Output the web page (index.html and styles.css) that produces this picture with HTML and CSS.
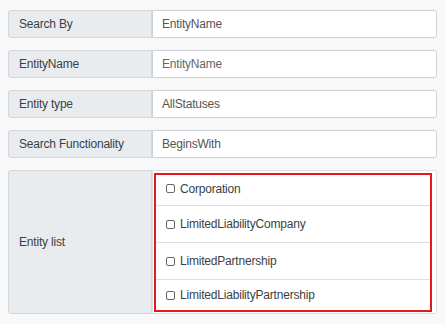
FILE: index.html
```html
<!DOCTYPE html>
<html lang="en">
<head>
  <meta charset="UTF-8" />
  <title>Entity Search</title>
  <meta name="viewport" content="width=device-width, initial-scale=1.0" />
  <link rel="stylesheet" href="styles.css">
</head>
<body>
  <form class="search-form" onsubmit="return false;">
    <div class="row">
      <label class="lbl" for="searchBy">Search By</label>
      <div class="val" id="searchBy">EntityName</div>
    </div>
    <div class="row">
      <label class="lbl" for="entityName">EntityName</label>
      <input class="val" id="entityName" type="text" placeholder="EntityName">
    </div>
    <div class="row">
      <label class="lbl" for="entityType">Entity type</label>
      <div class="val" id="entityType">AllStatuses</div>
    </div>
    <div class="row">
      <label class="lbl" for="searchFn">Search Functionality</label>
      <div class="val" id="searchFn">BeginsWith</div>
    </div>
    <div class="row tall">
      <label class="lbl">Entity list</label>
      <div class="val list-wrap">
        <div class="list">
          <label class="item"><input type="checkbox" value="Corporation"> Corporation</label>
          <label class="item"><input type="checkbox" value="LimitedLiabilityCompany"> LimitedLiabilityCompany</label>
          <label class="item"><input type="checkbox" value="LimitedPartnership"> LimitedPartnership</label>
          <label class="item"><input type="checkbox" value="LimitedLiabilityPartnership"> LimitedLiabilityPartnership</label>
        </div>
      </div>
    </div>
  </form>
</body>
</html>
```

FILE: styles.css
```css
body { margin: 0; padding: 10px 8px; background: #f8f8f8; font-family: 'Liberation Sans', Arial, sans-serif; font-size: 12px; letter-spacing: -0.2px; color: #3a3a3a; }
.search-form { display: flex; flex-direction: column; gap: 12px; }
.row { display: flex; height: 28px; }
.row.tall { height: 144px; }
.lbl { box-sizing: border-box; width: 144px; display: flex; align-items: center; padding-left: 10px; background: #e9ecef; border: 1px solid #d3d7dc; border-radius: 3px 0 0 3px; color: #3a3f47; }
.val { box-sizing: border-box; flex: 1; display: flex; align-items: center; padding: 0 0 0 9px; background: #fff; border: 1px solid #ccd1d8; border-radius: 0 3px 3px 0; color: #555; font: inherit; letter-spacing: inherit; }
input.val::placeholder { color: #666; }
input.val { outline: none; }
.list-wrap { padding: 2px 4px 1px 1px; align-items: stretch; border-color: #dcdfe3; }
.list { flex: 1; border: 2px solid #e3191b; display: flex; flex-direction: column; }
.item { display: flex; align-items: center; gap: 5px; height: 36px; padding-left: 10px; border-bottom: 1px solid #dedede; color: #3a3f47; }
.item:first-child { height: 31px; padding-bottom: 3px; box-sizing: border-box; }
.item:last-child { border-bottom: none; flex: 1; height: auto; }
.item input { appearance: none; margin: 0; width: 9px; height: 9px; border: 1px solid #666; border-radius: 2px; background: #fff; }
```
